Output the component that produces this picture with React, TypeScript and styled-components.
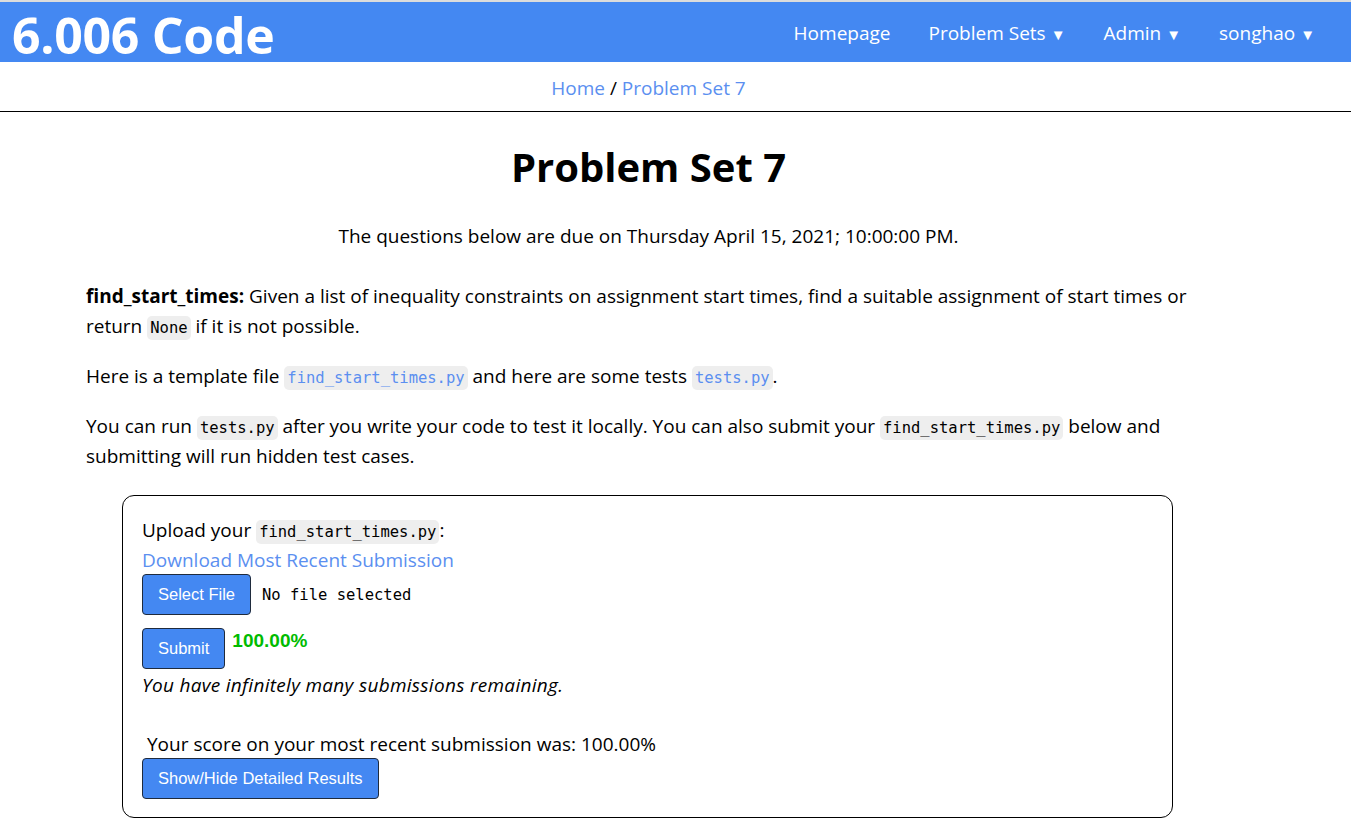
import React from 'react';
import styled, { createGlobalStyle } from 'styled-components';

const GlobalStyle = createGlobalStyle`
  html, body {
    margin: 0;
    padding: 0;
    background: #ffffff;
    color: #000000;
    font-family: 'Open Sans', 'Noto Sans', sans-serif;
  }
`;

const BLUE = '#4488f2';
const LINK = '#5b8ff0';

const TopBar = styled.header`
  display: flex;
  align-items: center;
  justify-content: space-between;
  height: 60px;
  background: ${BLUE};
  border-top: 2px solid #dcdcdc;
  padding: 0 12px;
`;

const Brand = styled.div`
  color: #ffffff;
  font-size: 50px;
  font-weight: 700;
  letter-spacing: -0.3px;
  line-height: 1;
  margin-top: 5px;
`;

const Nav = styled.nav`
  display: flex;
  align-items: center;
  gap: 38px;
  padding-right: 24px;
  margin-top: 2px;
`;

const NavItem = styled.a`
  color: #ffffff;
  font-size: 19px;
  text-decoration: none;
  white-space: nowrap;
`;

const Caret = styled.span`
  font-size: 15px;
  margin-left: 5px;
`;

const Crumbs = styled.div`
  text-align: center;
  font-size: 19px;
  padding: 13px 54px 10px 0;
  border-bottom: 1px solid #000000;
`;

const Link = styled.a`
  color: ${LINK};
  text-decoration: none;
`;

const Main = styled.main`
  width: 1125px;
  margin-left: 86px;
  font-size: 19px;
  line-height: 30px;
`;

const Title = styled.h1`
  text-align: center;
  font-size: 40px;
  font-weight: 700;
  margin: 31px 0 30px 0;
  line-height: 48px;
`;

const Due = styled.p`
  text-align: center;
  margin: 0 0 30px 0;
`;

const Para = styled.p`
  margin: 0 0 20px 0;
`;

const Code = styled.code<{ $link?: boolean }>`
  font-family: 'DejaVu Sans Mono', 'Liberation Mono', monospace;
  font-size: 15.5px;
  line-height: 1;
  background: #eeeeee;
  border-radius: 5px;
  padding: 3px 3px;
  color: ${(p) => (p.$link ? LINK : '#000000')};
`;

const UploadBox = styled.section`
  margin: 24px 38px 0 36px;
  border: 1px solid #000000;
  border-radius: 12px;
  padding: 19px 19px 18px 19px;
  display: flex;
  flex-direction: column;
  align-items: flex-start;
`;

const Row = styled.div<{ $gap: number; $top?: number }>`
  display: flex;
  align-items: flex-start;
  gap: ${(p) => p.$gap}px;
  margin-top: ${(p) => p.$top ?? 0}px;
`;

const Button = styled.button`
  font-family: 'Liberation Sans', Arial, sans-serif;
  font-size: 16.5px;
  color: #ffffff;
  background: ${BLUE};
  border: 1px solid #1f2b3d;
  border-radius: 4px;
  padding: 0 15px;
  height: 41px;
  cursor: pointer;
`;

const FileName = styled.span`
  font-family: 'DejaVu Sans Mono', 'Liberation Mono', monospace;
  font-size: 15.5px;
  align-self: center;
`;

const Score = styled.span`
  font-family: 'Liberation Sans', Arial, sans-serif;
  font-weight: 700;
  font-size: 19px;
  color: #00bb00;
  line-height: 26px;
`;

const Note = styled.div`
  font-style: italic;
  letter-spacing: 0.3px;
  margin-top: 1px;
`;

const Spacer = styled.div`
  height: 28px;
`;

const Recent = styled.div`
  padding-left: 5px;
  margin-top: 1px;
  margin-bottom: -1px;
`;

export default function App() {
  return (
    <>
      <GlobalStyle />
      <TopBar>
        <Brand>6.006 Code</Brand>
        <Nav>
          <NavItem href="#">Homepage</NavItem>
          <NavItem href="#">
            Problem Sets<Caret>▼</Caret>
          </NavItem>
          <NavItem href="#">
            Admin<Caret>▼</Caret>
          </NavItem>
          <NavItem href="#">
            songhao<Caret>▼</Caret>
          </NavItem>
        </Nav>
      </TopBar>
      <Crumbs>
        <Link href="#">Home</Link> / <Link href="#">Problem Set 7</Link>
      </Crumbs>
      <Main>
        <Title>Problem Set 7</Title>
        <Due>The questions below are due on Thursday April 15, 2021; 10:00:00 PM.</Due>
        <Para>
          <b>find_start_times:</b> Given a list of inequality constraints on assignment start times, find a
          suitable assignment of start times or return <Code>None</Code> if it is not possible.
        </Para>
        <Para>
          Here is a template file <Code $link>find_start_times.py</Code> and here are some tests{' '}
          <Code $link>tests.py</Code>.
        </Para>
        <Para>
          You can run <Code>tests.py</Code> after you write your code to test it locally. You can also submit
          your <Code>find_start_times.py</Code> below and submitting will run hidden test cases.
        </Para>
        <UploadBox>
          <div>
            Upload your <Code>find_start_times.py</Code>:
          </div>
          <Link href="#">Download Most Recent Submission</Link>
          <Row $gap={11} $top={-1}>
            <Button>Select File</Button>
            <FileName>No file selected</FileName>
          </Row>
          <Row $gap={7} $top={13}>
            <Button>Submit</Button>
            <Score>100.00%</Score>
          </Row>
          <Note>You have infinitely many submissions remaining.</Note>
          <Spacer />
          <Recent>Your score on your most recent submission was: 100.00%</Recent>
          <Button>Show/Hide Detailed Results</Button>
        </UploadBox>
      </Main>
    </>
  );
}
